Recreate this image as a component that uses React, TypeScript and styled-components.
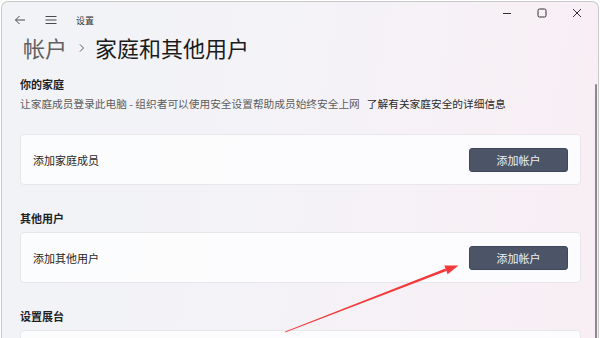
import React from "react";
import styled, { createGlobalStyle } from "styled-components";

const GlobalStyle = createGlobalStyle`
  html, body {
    margin: 0;
    padding: 0;
    background: #ffffff;
  }
  #root {
    width: 600px;
    height: 338px;
    overflow: hidden;
  }
`;

const FONT = `"Noto Sans CJK SC", "Noto Sans", sans-serif`;

interface CrumbProps {
  current?: boolean;
}

function App() {
  return (
    <>
      <GlobalStyle />
      <Window>
        <TitleBar>
          <NavIcon>
            <svg width="12" height="12" viewBox="0 0 12 12">
              <path
                d="M11 6H1.5M5.5 2L1.5 6l4 4"
                fill="none"
                stroke="#4a4a4a"
                strokeWidth="1"
              />
            </svg>
          </NavIcon>
          <NavIcon>
            <svg width="12" height="10" viewBox="0 0 12 10">
              <path
                d="M0.5 1.5h11M0.5 5h11M0.5 8.5h11"
                fill="none"
                stroke="#4a4a4a"
                strokeWidth="1"
              />
            </svg>
          </NavIcon>
          <AppName>设置</AppName>
          <Controls>
            <CaptionButton>
              <svg width="10" height="10" viewBox="0 0 10 10">
                <path d="M1 5.5h8" stroke="#333" strokeWidth="1" />
              </svg>
            </CaptionButton>
            <CaptionButton>
              <svg width="10" height="10" viewBox="0 0 10 10">
                <rect
                  x="1"
                  y="1"
                  width="8"
                  height="8"
                  rx="1.5"
                  fill="none"
                  stroke="#333"
                  strokeWidth="1"
                />
              </svg>
            </CaptionButton>
            <CaptionButton>
              <svg width="10" height="10" viewBox="0 0 10 10">
                <path
                  d="M1 1l8 8M9 1L1 9"
                  stroke="#333"
                  strokeWidth="1"
                />
              </svg>
            </CaptionButton>
          </Controls>
        </TitleBar>

        <Content>
          <Heading>
            <Crumb>帐户</Crumb>
            <Chevron>
              <svg width="8" height="10" viewBox="0 0 8 10">
                <path
                  d="M2 1.5L5.5 5 2 8.5"
                  fill="none"
                  stroke="#5f5f5f"
                  strokeWidth="1"
                />
              </svg>
            </Chevron>
            <Crumb current>家庭和其他用户</Crumb>
          </Heading>

          <SectionTitle>你的家庭</SectionTitle>
          <Description>
            让家庭成员登录此电脑 - 组织者可以使用安全设置帮助成员始终安全上网
            <LearnMore>了解有关家庭安全的详细信息</LearnMore>
          </Description>
          <Card>
            <CardLabel>添加家庭成员</CardLabel>
            <AccountButton>添加帐户</AccountButton>
          </Card>

          <SectionTitle spaced>其他用户</SectionTitle>
          <Card>
            <CardLabel>添加其他用户</CardLabel>
            <AccountButton>添加帐户</AccountButton>
          </Card>

          <SectionTitle spaced>设置展台</SectionTitle>
          <Card />
        </Content>

        <ScrollThumb />

        <Annotation width="600" height="338" viewBox="0 0 600 338">
          <polygon
            points="285,332.4 285.2,331.6 445.4,268.5 446.4,270.9"
            fill="#f23a3a"
          />
          <polygon
            points="458.5,265.4 447.6,274.2 444.3,265.4"
            fill="#f23a3a"
          />
        </Annotation>
      </Window>
    </>
  );
}

const Window = styled.div`
  position: relative;
  box-sizing: border-box;
  margin: 1px 1px 0 1px;
  width: 598px;
  height: 340px;
  border: 1px solid #c9c9cc;
  border-bottom: none;
  border-radius: 7px 7px 0 0;
  overflow: hidden;
  background: linear-gradient(
    100deg,
    #f2f3f7 0%,
    #f3f3f7 35%,
    #f6f1f6 70%,
    #f8eef4 100%
  );
  font-family: ${FONT};
`;

const TitleBar = styled.div`
  display: flex;
  align-items: center;
  height: 32px;
  padding-left: 11px;
`;

const NavIcon = styled.div`
  display: flex;
  align-items: center;
  justify-content: center;
  width: 14px;
  height: 14px;
  margin-right: 17px;
  margin-top: 3px;
`;

const AppName = styled.div`
  font-size: 9px;
  color: #333333;
  margin-left: 1px;
  margin-top: 4px;
`;

const Controls = styled.div`
  display: flex;
  margin-left: auto;
  align-self: flex-start;
  margin-top: 5px;
  margin-right: 4px;
`;

const CaptionButton = styled.div`
  display: flex;
  align-items: center;
  justify-content: center;
  width: 35px;
  height: 12px;
`;

const Content = styled.div`
  padding: 0 17px 0 18px;
`;

const Heading = styled.div`
  display: flex;
  align-items: center;
  height: 30px;
  margin-top: -2px;
  margin-left: 3px;
  margin-bottom: 14px;
`;

const Crumb = styled.span<CrumbProps>`
  font-size: 22px;
  line-height: 30px;
  color: ${(p) => (p.current ? "#1c1c1c" : "#606060")};
`;

const Chevron = styled.span`
  display: flex;
  align-items: center;
  margin: 2px 9px 0 11px;
`;

const SectionTitle = styled.div<{ spaced?: boolean }>`
  font-size: 11px;
  line-height: 16px;
  font-weight: 600;
  color: #1f1f1f;
  margin-top: ${(p) => (p.spaced ? "25px" : "0")};
  margin-bottom: ${(p) => (p.spaced ? "6px" : "4px")};
`;

const Description = styled.div`
  font-size: 10.7px;
  line-height: 16px;
  color: #5c5c5c;
  margin-bottom: 22px;
  white-space: nowrap;
`;

const LearnMore = styled.span`
  color: #2b2b2b;
  margin-left: 7px;
`;

const Card = styled.div`
  box-sizing: border-box;
  display: flex;
  align-items: center;
  justify-content: space-between;
  height: 51px;
  padding: 0 12px;
  background: rgba(253, 253, 254, 0.85);
  border: 1px solid #e7e7ea;
  border-radius: 4px;
`;

const CardLabel = styled.span`
  font-size: 11px;
  color: #1f1f1f;
`;

const AccountButton = styled.button`
  box-sizing: border-box;
  width: 99px;
  height: 24px;
  border: 1px solid #3f4858;
  border-radius: 3px;
  background: #4b5567;
  color: #eef0f3;
  font-family: ${FONT};
  font-size: 11px;
  padding: 0;
`;

const ScrollThumb = styled.div`
  position: absolute;
  right: 1px;
  top: 82px;
  width: 2px;
  height: 260px;
  border-radius: 1px;
  background: #8a8a8d;
`;

const Annotation = styled.svg`
  position: absolute;
  left: -2px;
  top: -2px;
  pointer-events: none;
`;

export default App;
